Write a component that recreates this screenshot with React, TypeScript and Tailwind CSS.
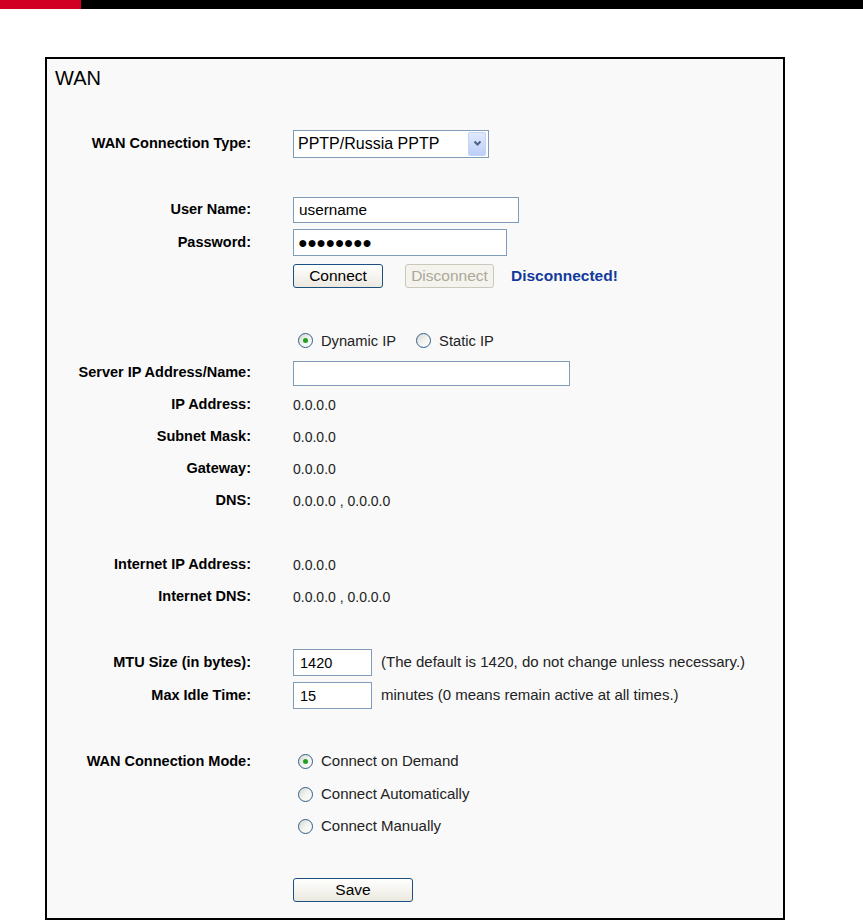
import React from "react";

function Radio({ checked }: { checked?: boolean }) {
  return (
    <span className="relative inline-flex h-[15px] w-[15px] items-center justify-center rounded-full border border-[#305e8c] bg-gradient-to-br from-[#d8d8d2] via-[#f2f2ee] to-white">
      {checked && <span className="h-[5px] w-[5px] rounded-full bg-[#21a121]" />}
    </span>
  );
}

function Label({ children }: { children?: React.ReactNode }) {
  return (
    <div className="w-[204px] shrink-0 text-right text-[14.5px] font-bold text-black">{children}</div>
  );
}

export default function App() {
  const val = "text-[14px] text-[#222]";
  const sent = "text-[15px] text-[#222]";
  const btn =
    "flex h-[24px] items-center justify-center rounded-[3px] border border-[#1c4f82] bg-gradient-to-b from-white to-[#ebe9df] text-[15.5px] text-black";
  return (
    <div className="min-h-[921px] w-[863px] bg-white" style={{ fontFamily: '"Liberation Sans", Arial, sans-serif' }}>
      <div className="flex h-[9px]">
        <div className="w-[81px] bg-[#d10023]" />
        <div className="flex-1 bg-black" />
      </div>
      <div className="ml-[45px] mt-[48px] h-[863px] w-[740px] border-2 border-black bg-[#f9f9f9]">
        <div className="h-[31px] pl-[8px] pt-[7px] text-[20px] leading-[24px] text-black">WAN</div>
        <div className="mt-[37px] flex flex-col">
          <div className="flex h-[33px] items-center">
            <Label>WAN Connection Type:</Label>
            <div className="pl-[42px]">
              <div className="flex h-[28px] w-[196px] items-center border border-[#7f9db9] bg-white">
                <span className="pl-[4px] text-[16px] text-black">PPTP/Russia PPTP</span>
                <span className="ml-auto mr-[2px] flex h-[24px] w-[18px] items-center justify-center rounded-[2px] border border-[#c3d3f5] bg-gradient-to-b from-[#e1e9fd] to-[#bccff7]">
                  <svg width="9" height="7" viewBox="0 0 9 7">
                    <path d="M1.5 1.5 L4.5 4.5 L7.5 1.5" fill="none" stroke="#4d6185" strokeWidth="2" />
                  </svg>
                </span>
              </div>
            </div>
          </div>
          <div className="h-[33px]" />
          <div className="flex h-[33px] items-center">
            <Label>User Name:</Label>
            <div className="pl-[42px]">
              <input
                readOnly
                defaultValue="username"
                className="h-[26px] w-[226px] border border-[#7f9db9] bg-white px-[5px] text-[15.3px] text-black outline-none"
              />
            </div>
          </div>
          <div className="flex h-[33px] items-center">
            <Label>Password:</Label>
            <div className="pl-[42px]">
              <div className="flex h-[27px] w-[214px] items-center border border-[#7f9db9] bg-white px-[4px] text-[16px] tracking-[-0.5px] text-black">
                ●●●●●●●●
              </div>
            </div>
          </div>
          <div className="flex h-[33px] items-center">
            <Label />
            <div className="flex items-center pl-[42px]">
              <div className={btn + " w-[90px]"}>Connect</div>
              <div className="ml-[22px] flex h-[24px] w-[89px] items-center justify-center rounded-[3px] border border-[#cac8bb] bg-[#f4f3ee] text-[15.5px] text-[#aca899]">
                Disconnect
              </div>
              <span className="ml-[17px] text-[15.5px] font-bold text-[#123a9c]">Disconnected!</span>
            </div>
          </div>
          <div className="h-[33px]" />
          <div className="flex h-[32px] items-center">
            <Label />
            <div className="flex items-center pl-[42px] text-[14.7px] text-[#222]">
              <span className="ml-[5px] flex"><Radio checked /></span>
              <span className="ml-[8px]">Dynamic IP</span>
              <span className="ml-[20px] flex"><Radio /></span>
              <span className="ml-[8px]">Static IP</span>
            </div>
          </div>
          <div className="flex h-[32px] items-center">
            <Label>Server IP Address/Name:</Label>
            <div className="pl-[42px]">
              <input readOnly className="h-[25px] w-[277px] border border-[#7f9db9] bg-white outline-none" />
            </div>
          </div>
          <div className="flex h-[32px] items-center">
            <Label>IP Address:</Label>
            <div className={"pl-[42px] " + val}>0.0.0.0</div>
          </div>
          <div className="flex h-[32px] items-center">
            <Label>Subnet Mask:</Label>
            <div className={"pl-[42px] " + val}>0.0.0.0</div>
          </div>
          <div className="flex h-[32px] items-center">
            <Label>Gateway:</Label>
            <div className={"pl-[42px] " + val}>0.0.0.0</div>
          </div>
          <div className="flex h-[32px] items-center">
            <Label>DNS:</Label>
            <div className={"pl-[42px] " + val}>0.0.0.0 , 0.0.0.0</div>
          </div>
          <div className="h-[32px]" />
          <div className="flex h-[32px] items-center">
            <Label>Internet IP Address:</Label>
            <div className={"pl-[42px] " + val}>0.0.0.0</div>
          </div>
          <div className="flex h-[32px] items-center">
            <Label>Internet DNS:</Label>
            <div className={"pl-[42px] " + val}>0.0.0.0 , 0.0.0.0</div>
          </div>
          <div className="h-[33px]" />
          <div className="flex h-[33px] items-center">
            <Label>MTU Size (in bytes):</Label>
            <div className="flex items-center pl-[42px]">
              <input
                readOnly
                defaultValue="1420"
                className="h-[27px] w-[79px] border border-[#7f9db9] bg-white px-[6px] text-[14.5px] text-black outline-none"
              />
              <span className={"ml-[9px] " + sent}>(The default is 1420, do not change unless necessary.)</span>
            </div>
          </div>
          <div className="flex h-[33px] items-center">
            <Label>Max Idle Time:</Label>
            <div className="flex items-center pl-[42px]">
              <input
                readOnly
                defaultValue="15"
                className="h-[27px] w-[79px] border border-[#7f9db9] bg-white px-[6px] text-[14.5px] text-black outline-none"
              />
              <span className={"ml-[9px] " + sent}>minutes (0 means remain active at all times.)</span>
            </div>
          </div>
          <div className="h-[33px]" />
          <div className="flex h-[33px] items-center">
            <Label>WAN Connection Mode:</Label>
            <div className="flex items-center pl-[42px] text-[15px] text-[#222]">
              <span className="ml-[5px] flex"><Radio checked /></span>
              <span className="ml-[8px]">Connect on Demand</span>
            </div>
          </div>
          <div className="flex h-[32px] items-center">
            <Label />
            <div className="flex items-center pl-[42px] text-[15px] text-[#222]">
              <span className="ml-[5px] flex"><Radio /></span>
              <span className="ml-[8px]">Connect Automatically</span>
            </div>
          </div>
          <div className="flex h-[32px] items-center">
            <Label />
            <div className="flex items-center pl-[42px] text-[15px] text-[#222]">
              <span className="ml-[5px] flex"><Radio /></span>
              <span className="ml-[8px]">Connect Manually</span>
            </div>
          </div>
          <div className="h-[32px]" />
          <div className="flex h-[32px] items-center">
            <Label />
            <div className="pl-[42px]">
              <div className={btn + " w-[120px]"}>Save</div>
            </div>
          </div>
        </div>
      </div>
    </div>
  );
}
